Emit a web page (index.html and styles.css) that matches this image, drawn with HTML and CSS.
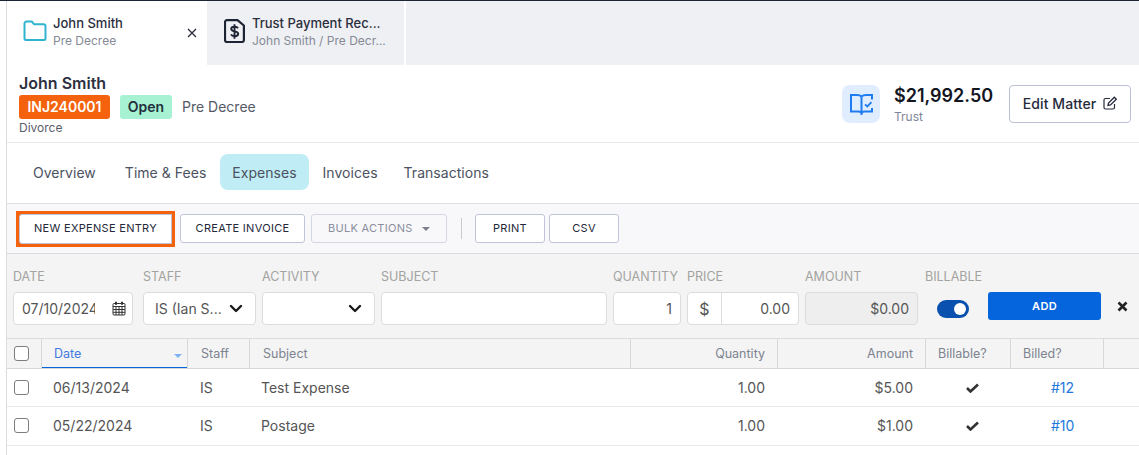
FILE: index.html
```html
<!DOCTYPE html>
<html lang="en">
<head>
<meta charset="utf-8">
<title>John Smith - Expenses</title>
<link rel="stylesheet" href="styles.css">
</head>
<body>
<div class="topline"></div>
<div class="shell">
  <div class="tabbar">
    <div class="doc-tab active">
      <svg class="doc-icon" width="24" height="24" viewBox="0 0 24 24" fill="none" stroke="#2fb3cf" stroke-width="2" stroke-linejoin="round"><path d="M1.500 4.500a2 2 0 0 1 2-2h5.200l2.300 2.700h9.500a2 2 0 0 1 2 2v12.300a1.500 1.500 0 0 1-1.500 1.500H3a1.500 1.500 0 0 1-1.500-1.500z"/></svg>
      <div class="doc-text"><div class="doc-title">John Smith</div><div class="doc-sub">Pre Decree</div></div>
      <svg class="doc-close" width="10" height="10" viewBox="0 0 10 10" stroke="#2c2f3a" stroke-width="1.300"><path d="M1 1l8 8M9 1l-8 8"/></svg>
    </div>
    <div class="doc-tab second">
      <svg class="doc-icon" width="21" height="24" viewBox="0 0 21 24" fill="none" stroke="#1d2433" stroke-width="2.200" stroke-linejoin="round"><path d="M3 1.100h10.500l6.400 5.400V21a2 2 0 0 1-2 2H3a2 2 0 0 1-2-2V3.100a2 2 0 0 1 2-2z"/><path d="M14 9.300c-.6-1.100-1.900-1.600-3.500-1.600-1.900 0-3.300 .9-3.300 2.300 0 3.200 7 1.500 7 4.800 0 1.500-1.500 2.400-3.500 2.400-1.700 0-3.100-.6-3.700-1.800M10.500 5.300v14.500" stroke-width="1.900"/></svg>
      <div class="doc-text"><div class="doc-title">Trust Payment Rec...</div><div class="doc-sub">John Smith / Pre Decr...</div></div>
    </div>
    <div class="tab-fill"></div>
  </div>

  <header class="matter">
    <div class="matter-left">
      <div class="matter-name">John Smith</div>
      <div class="matter-badges">
        <span class="badge code">INJ240001</span>
        <span class="badge open">Open</span>
        <span class="stage">Pre Decree</span>
      </div>
      <div class="matter-type">Divorce</div>
    </div>
    <div class="matter-right">
      <div class="trust-icon">
        <svg width="23" height="21" viewBox="0 0 23 21" fill="none" stroke="#1f7cf0" stroke-width="2"><path d="M11.500 2.500C10.500 1.500 9 1 7 1H1v16.500h7c1.500 0 2.700 .4 3.500 1.200V21"/><path d="M11.500 2.500C12.500 1.500 14 1 16 1h6v4.500M11.500 18.700c.8-.8 2-1.200 3.500-1.200h7V14"/><path d="M11.500 2.500v16.200"/><path d="M15 10.300l2.300 2.200 4.200-4.300" stroke-width="1.800"/></svg>
      </div>
      <div class="trust-text"><div class="trust-amount">$21,992.50</div><div class="trust-label">Trust</div></div>
      <button class="edit-btn">Edit Matter
        <svg width="14" height="14" viewBox="0 0 14 14" fill="none" stroke="#262b3b" stroke-width="1.200"><path d="M11.500 8v3.500a1.500 1.500 0 0 1-1.500 1.500H2.500A1.500 1.500 0 0 1 1 11.500V4a1.500 1.500 0 0 1 1.500-1.500H7"/><path d="M5 9.500l.5-2.500 5.800-5.800 2 2L7.500 9z" stroke-width="1.300"/></svg>
      </button>
    </div>
  </header>

  <nav class="subnav">
    <a class="subnav-item">Overview</a>
    <a class="subnav-item">Time &amp; Fees</a>
    <a class="subnav-item current">Expenses</a>
    <a class="subnav-item">Invoices</a>
    <a class="subnav-item">Transactions</a>
  </nav>

  <div class="toolbar">
    <div class="highlight"><button class="tool-btn new">NEW EXPENSE ENTRY</button></div>
    <button class="tool-btn create">CREATE INVOICE</button>
    <button class="tool-btn bulk">BULK ACTIONS <span class="caret"></span></button>
    <span class="tool-sep"></span>
    <button class="tool-btn print">PRINT</button>
    <button class="tool-btn csv">CSV</button>
  </div>

  <div class="entry">
    <div class="field f-date"><label>DATE</label>
      <div class="box date-box"><span class="date-val">07/10/2024</span>
        <svg width="14" height="15" viewBox="0 0 14 15" fill="none" stroke="#333" stroke-width="1"><rect x="1" y="2.500" width="12" height="11.500" rx="1"/><path d="M1 5.500h12M1 8.500h12M1 11.300h12M4 5.500v8.500M7 5.500v8.500M10 5.500v8.500"/><path d="M4 .8v3M10 .8v3" stroke-width="2"/></svg>
      </div>
    </div>
    <div class="field f-staff"><label>STAFF</label>
      <div class="box select-box"><span>IS (Ian S...</span>
        <svg class="chev" width="14" height="9" viewBox="0 0 14 9" fill="none" stroke="#1a1a1a" stroke-width="2.400" stroke-linecap="round" stroke-linejoin="round"><path d="M2 2l5 5 5-5"/></svg>
      </div>
    </div>
    <div class="field f-activity"><label>ACTIVITY</label>
      <div class="box select-box end">
        <svg class="chev" width="14" height="9" viewBox="0 0 14 9" fill="none" stroke="#1a1a1a" stroke-width="2.400" stroke-linecap="round" stroke-linejoin="round"><path d="M2 2l5 5 5-5"/></svg>
      </div>
    </div>
    <div class="field f-subject"><label>SUBJECT</label><div class="box"></div></div>
    <div class="field f-qty"><label>QUANTITY</label><div class="box right">1</div></div>
    <div class="field f-price"><label>PRICE</label>
      <div class="box price-box"><span class="dollar">$</span><span class="price-val">0.00</span></div>
    </div>
    <div class="field f-amount"><label>AMOUNT</label><div class="box right disabled">$0.00</div></div>
    <div class="field f-bill"><label>BILLABLE</label><div class="toggle-row"><span class="toggle"><span class="knob"></span></span></div></div>
    <button class="add-btn">ADD</button>
    <svg class="entry-x" width="11" height="11" viewBox="0 0 11 11" stroke="#222" stroke-width="2.600"><path d="M1.500 1.500l8 8M9.500 1.500l-8 8"/></svg>
  </div>

  <div class="grid-row head">
    <div class="c c-check"><span class="cb"></span></div>
    <div class="c c-date sorted">Date<span class="sort"></span></div>
    <div class="c c-staff">Staff</div>
    <div class="c c-subject">Subject</div>
    <div class="c c-qty num">Quantity</div>
    <div class="c c-amount num">Amount</div>
    <div class="c c-billable">Billable?</div>
    <div class="c c-billed">Billed?</div>
    <div class="c c-end"></div>
  </div>
  <div class="grid-row body">
    <div class="c c-check"><span class="cb"></span></div>
    <div class="c c-date">06/13/2024</div>
    <div class="c c-staff">IS</div>
    <div class="c c-subject">Test Expense</div>
    <div class="c c-qty num">1.00</div>
    <div class="c c-amount num">$5.00</div>
    <div class="c c-billable center"><svg width="13" height="10" viewBox="0 0 13 10" fill="none" stroke="#333" stroke-width="2.600"><path d="M1 5l3.500 3.500L12 1.500"/></svg></div>
    <div class="c c-billed link">#12</div>
    <div class="c c-end"></div>
  </div>
  <div class="grid-row body">
    <div class="c c-check"><span class="cb"></span></div>
    <div class="c c-date">05/22/2024</div>
    <div class="c c-staff">IS</div>
    <div class="c c-subject">Postage</div>
    <div class="c c-qty num">1.00</div>
    <div class="c c-amount num">$1.00</div>
    <div class="c c-billable center"><svg width="13" height="10" viewBox="0 0 13 10" fill="none" stroke="#333" stroke-width="2.600"><path d="M1 5l3.500 3.500L12 1.500"/></svg></div>
    <div class="c c-billed link">#10</div>
    <div class="c c-end"></div>
  </div>
</div>
</body>
</html>
```
FILE: styles.css
```css
* { box-sizing: border-box; }
html, body { margin: 0; padding: 0; height: 455px; overflow: hidden; background: #fff; }
body { font-family: Inter, "Liberation Sans", sans-serif; color: #2c3040; }
button { font-family: inherit; cursor: pointer; }

.topline { height: 1px; background: #1d2433; }
.shell { margin-left: 6px; border-left: 1px solid #dcdce0; height: 454px; }

/* Document tabs */
.tabbar { display: flex; height: 64px; }
.doc-tab { display: flex; align-items: center; gap: 6px; height: 64px; padding-bottom: 4px; }
.doc-tab.active { width: 200px; padding-left: 16px; background: #fff; }
.doc-tab.second { width: 197px; padding-left: 17px; gap: 7px; background: #eff0f4; margin-right: 2px; }
.tab-fill { flex: 1; background: #eff0f4; }
.doc-text { display: flex; flex-direction: column; gap: 2px; }
.doc-title { font-size: 13px; font-weight: 500; line-height: 16px; color: #2a2e3d; }
.doc-sub { font-size: 12px; line-height: 15px; color: #858a95; }
.doc-close { margin-left: auto; margin-right: 10px; margin-top: 4px; }

/* Matter header */
.matter { display: flex; justify-content: space-between; height: 78px; padding: 10px 8px 0 12px; border-bottom: 1px solid #e8e8ee; }
.matter-name { font-size: 16px; font-weight: 600; line-height: 17px; color: #2d3040; }
.matter-badges { display: flex; align-items: center; height: 24px; margin-top: 3px; }
.badge { display: inline-flex; align-items: center; height: 24px; padding-bottom: 1px; border-radius: 3px; font-size: 14px; font-weight: 600; }
.badge.code { width: 91px; justify-content: center; background: #f5620d; color: #fff; }
.badge.open { width: 52px; justify-content: center; margin-left: 10px; background: #a6f2d3; color: #24303c; }
.stage { margin-left: 10px; padding-bottom: 1px; font-size: 14px; color: #555a66; }
.matter-type { font-size: 12px; line-height: 14px; margin-top: 2px; color: #5b5c6b; }
.matter-right { display: flex; align-items: center; align-self: flex-start; margin-top: 10px; height: 38px; }
.trust-icon { display: flex; align-items: center; justify-content: center; width: 38px; height: 38px; border-radius: 8px; background: #e0edff; }
.trust-text { width: 115px; margin-left: 14px; }
.trust-amount { font-size: 18px; font-weight: 600; line-height: 22px; color: #14161f; }
.trust-label { font-size: 12px; line-height: 15px; margin-top: 2px; color: #7f859b; }
.edit-btn { display: flex; align-items: center; justify-content: center; gap: 7px; width: 122px; height: 38px; padding: 0 0 2px 0; background: #fff; border: 1px solid #bcc2d6; border-radius: 4px; font-size: 14px; font-weight: 500; color: #262b3b; letter-spacing: .1px; }

/* Sub nav */
.subnav { display: flex; align-items: center; height: 61px; padding-left: 14px; padding-bottom: 2px; border-bottom: 1px solid #dfdfe4; }
.subnav-item { display: flex; align-items: center; height: 36px; padding: 0 12px; font-size: 14px; color: #4c5261; border-radius: 8px; margin-right: 2px; letter-spacing: .03px; }
.subnav-item:first-child { margin-right: 5px; }
.subnav-item:nth-child(2) { margin-right: 2px; }
.subnav-item.current { background: #c0edf5; margin-right: 2px; }

/* Toolbar */
.toolbar { display: flex; align-items: center; height: 50px; padding-left: 9px; background: #f8f8fa; border-bottom: 1px solid #dcdce0; }
.highlight { display: flex; width: 159px; height: 36px; padding: 3px; background: #f5620d; margin-right: 5px; }
.tool-btn { height: 29px; padding: 0 0 2px; background: #fff; border: 1px solid #bfc4d8; border-radius: 3px; font-size: 11px; font-weight: 400; letter-spacing: .3px; color: #242838; }
.tool-btn.new { width: 153px; height: 30px; border-radius: 3px 0 0 3px; }
.tool-btn.create { width: 125px; margin-right: 6px; }
.tool-btn.bulk { width: 136px; margin-right: 14px; color: #8b8f9d; border-color: #d5d8e2; background: #f8f8fa; }
.caret { display: inline-block; margin-left: 6px; vertical-align: 1px; border-top: 4px solid #7d808c; border-left: 4px solid transparent; border-right: 4px solid transparent; }
.tool-sep { width: 1px; height: 21px; background: #c9cad0; margin-right: 13px; }
.tool-btn.print { width: 70px; margin-right: 4px; }
.tool-btn.csv { width: 70px; }

/* Entry form */
.entry { display: flex; align-items: flex-start; height: 85px; padding: 14px 0 0 6px; background: #f4f4f4; border-bottom: 1px solid #dcdcdc; }
.field { display: flex; flex-direction: column; margin-right: 6px; }
.field label { height: 24px; padding-top: 1px; font-size: 12.500px; line-height: 16px; color: #a3a3a0; white-space: nowrap; }
.box { display: flex; align-items: center; height: 33px; background: #fff; border: 1px solid #dcdcdc; border-radius: 4px; font-size: 14px; color: #555; }
.box.right { justify-content: flex-end; padding-right: 8px; }
.f-date { width: 120px; margin-right: 10px; }
.date-box { justify-content: space-between; padding: 0 6px 0 8px; }
.date-val { width: 73px; overflow: hidden; white-space: nowrap; }
.f-staff { width: 113px; margin-right: 6px; }
.select-box { justify-content: space-between; padding: 0 12px 0 11px; }
.select-box.end { justify-content: flex-end; }
.f-activity { width: 113px; }
.f-subject { width: 226px; }
.f-qty { width: 68px; }
.f-price { width: 112px; }
.price-box { overflow: hidden; }
.dollar { display: flex; align-items: center; justify-content: center; width: 34px; height: 100%; border-right: 1px solid #dcdcdc; font-size: 16px; }
.price-val { flex: 1; text-align: right; padding-right: 8px; }
.f-amount { width: 113px; margin-right: 7px; }
.box.disabled { background: #eeeeee; }
.f-bill { width: 57px; }
.toggle-row { height: 33px; display: flex; align-items: center; padding-left: 12px; }
.toggle { display: flex; align-items: center; justify-content: flex-end; width: 32px; height: 18px; padding-right: 3px; border-radius: 9px; background: #0a50ae; }
.knob { width: 12px; height: 12px; border-radius: 50%; background: #fff; }
.add-btn { width: 113px; height: 28px; margin-top: 24px; padding: 0; border: 0; border-radius: 3px; background: #0565dc; color: #fff; font-size: 11px; font-weight: 600; letter-spacing: .3px; }
.entry-x { margin: 33px 0 0 16px; }

/* Table */
.grid-row { display: grid; grid-template-columns: 35px 146px 62px 381px 147px 148px 85px 93px 1fr; align-items: stretch; }
.grid-row.head { height: 30px; background: #f4f4f4; border-bottom: 1px solid #d8d8d8; font-size: 12.500px; color: #7d8390; }
.grid-row.body { height: 38px; border-bottom: 1px solid #e9e9e9; font-size: 14px; color: #555; }
.grid-row.body + .grid-row.body { height: 39px; padding-bottom: 1px; }
.c { display: flex; align-items: center; padding-left: 12px; white-space: nowrap; }
.head .c { border-right: 1px solid #d8d8d8; }
.head .c-end { border-right: 0; }
.c-check { padding-left: 7px; }
.head .c-date { padding-left: 12px; }
.head .c-staff { padding-left: 13px; }
.head .c-subject { padding-left: 13px; }
.body .c-date { padding-left: 11px; }
.body .c-subject { padding-left: 11px; }
.c.num { justify-content: flex-end; padding: 0 12px 0 0; }
.body .c.num { padding-right: 13px; }
.c.center { justify-content: center; padding: 0 0 0 7px; }
.cb { display: block; width: 15px; height: 15px; background: #fff; border: 1px solid #7d7d7d; border-radius: 3px; }
.sorted { position: relative; color: #3f79e0; box-shadow: inset 0 -1px 0 #0565dc; }
.sort { position: absolute; right: 5px; top: 15px; border-top: 4px solid #7fb0ef; border-left: 4px solid transparent; border-right: 4px solid transparent; }
.link { color: #2277dc; padding-left: 40px; }
```
